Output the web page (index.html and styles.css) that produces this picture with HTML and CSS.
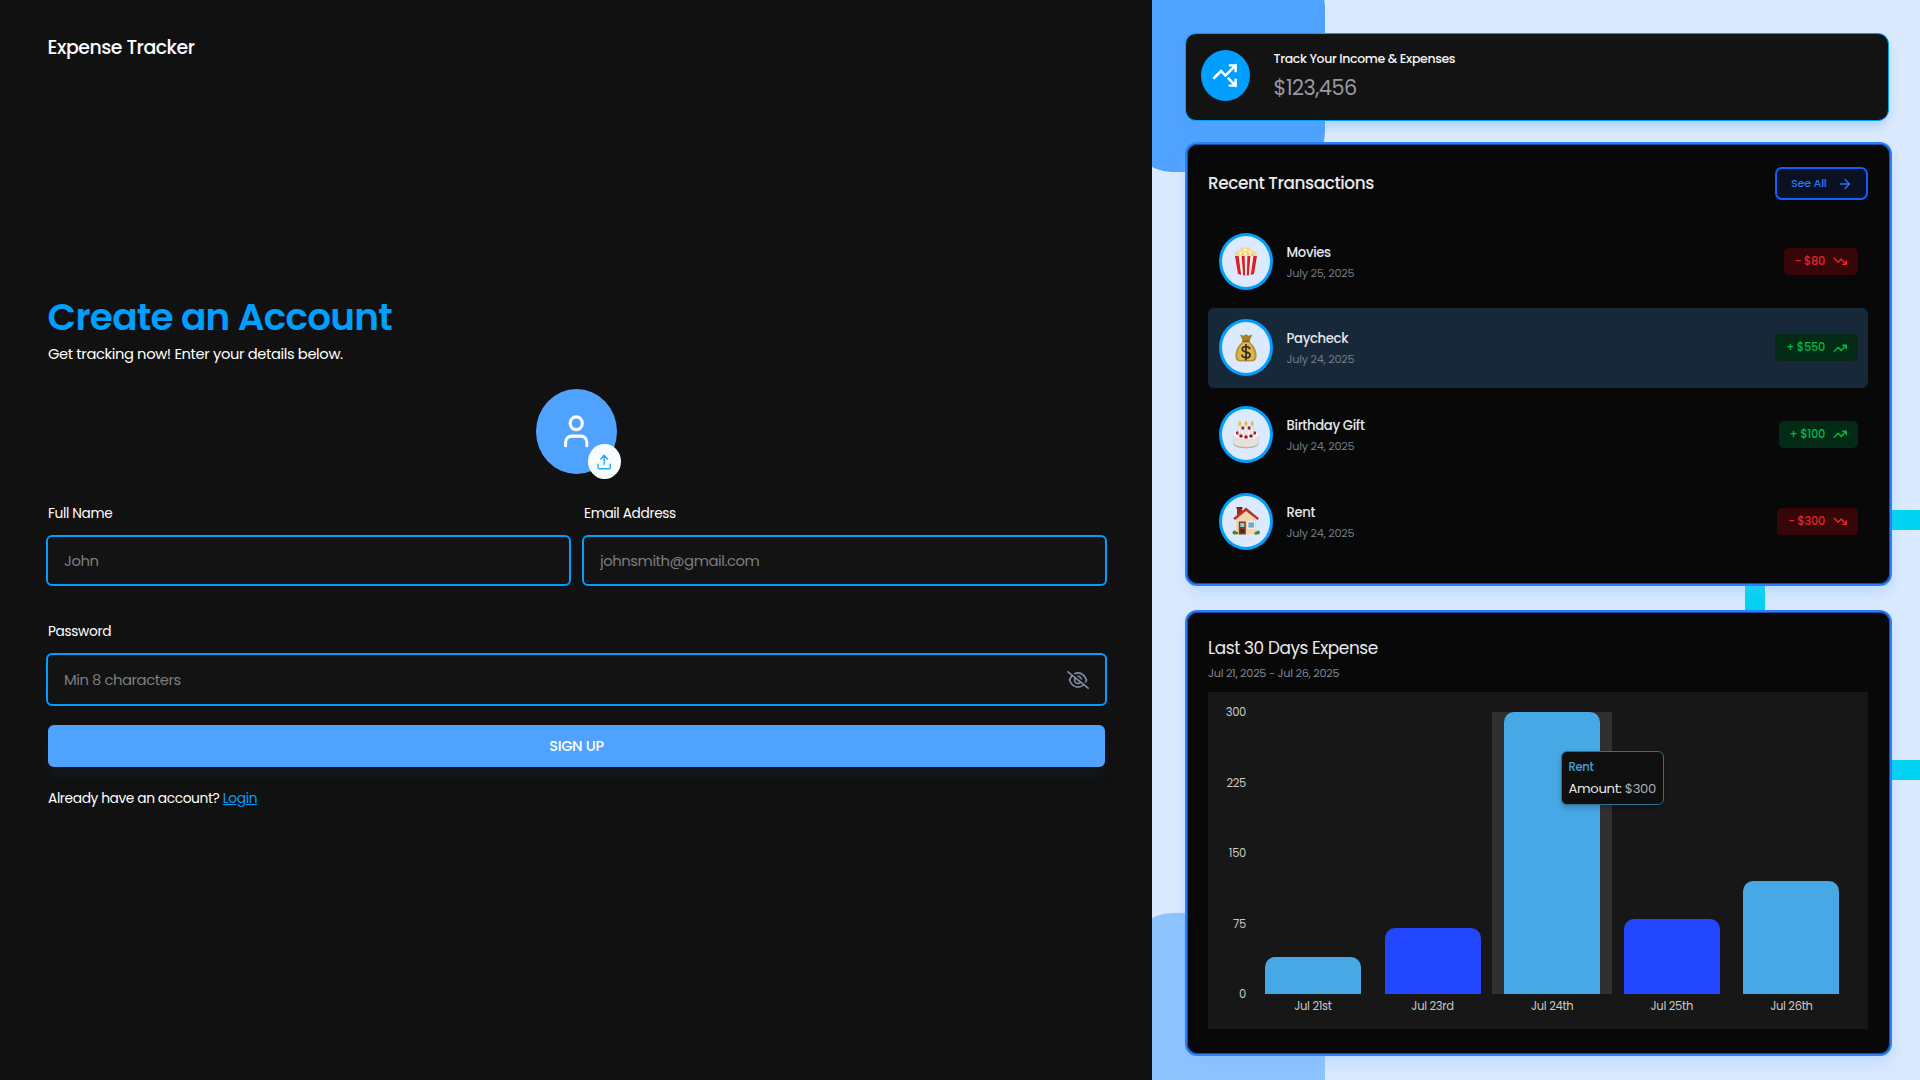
FILE: index.html
```html
<!DOCTYPE html>
<html lang="en">
<head>
<meta charset="utf-8">
<title>Expense Tracker</title>
<link rel="stylesheet" href="styles.css">
</head>
<body>
<svg class="sprite" aria-hidden="true">
  <symbol id="up" viewBox="0 0 24 24"><path d="m22 7-8.5 8.5-5-5L2 17M16 7h6v6"/></symbol>
  <symbol id="down" viewBox="0 0 24 24"><path d="m22 17-8.5-8.5-5 5L2 7M16 17h6v-6"/></symbol>
</svg>
<main class="page">
  <section class="auth">
    <h2 class="brand">Expense Tracker</h2>
    <h1 class="title">Create an Account</h1>
    <p class="lead">Get tracking now! Enter your details below.</p>
    <div class="photo">
      <svg class="photo-icon" viewBox="0 0 24 24" preserveAspectRatio="none"><circle cx="12" cy="7" r="4"/><path d="M19 21v-2a4 4 0 0 0-4-4H9a4 4 0 0 0-4 4v2"/></svg>
      <button class="upload" type="button" aria-label="Upload photo"><svg class="upload-icon" viewBox="0 0 24 24" preserveAspectRatio="none"><path d="M12 3v12M17 8l-5-5-5 5M21 15v4a2 2 0 0 1-2 2H5a2 2 0 0 1-2-2v-4"/></svg></button>
    </div>
    <form class="form">
      <div class="field"><label class="label">Full Name</label><div class="box"><input class="input" type="text" placeholder="John"></div></div>
      <div class="field"><label class="label">Email Address</label><div class="box"><input class="input" type="text" placeholder="johnsmith@gmail.com"></div></div>
      <div class="field field-wide"><label class="label">Password</label><div class="box box-tall"><input class="input" type="password" placeholder="Min 8 characters"><svg class="eye" viewBox="0 0 640 512" preserveAspectRatio="none"><path d="M70 256C130 120 220 55 320 55S510 120 570 256C510 392 420 457 320 457S130 392 70 256z"/><circle cx="320" cy="256" r="100"/><path d="M350 200a60 60 0 0 1 20 80"/><path class="eye-gap" d="M70 0L640 452"/><path d="M26 26L614 488"/></svg></div></div>
    </form>
    <button class="submit" type="button">SIGN UP</button>
    <p class="switch">Already have an account? <a class="link" href="#">Login</a></p>
  </section>

  <aside class="showcase">
    <div class="shape shape-top"></div>
    <div class="shape shape-ring"></div>
    <div class="shape shape-bottom"></div>

    <div class="stat">
      <div class="stat-icon"><svg class="stat-svg" viewBox="0 0 24 24"><path d="M14.8 14.8 21 21M21 16v5h-5M21 3l-9 9-4-4-6 6M21 8V3h-5"/></svg></div>
      <div class="stat-text"><h6 class="stat-label">Track Your Income &amp; Expenses</h6><span class="stat-value">$123,456</span></div>
    </div>

    <div class="card card-list">
      <div class="card-head"><h5 class="card-title">Recent Transactions</h5>
        <button class="see-all" type="button">See All<svg class="arrow" viewBox="0 0 24 24"><path d="M3 12h18M12 3l9 9-9 9"/></svg></button></div>
      <ul class="rows">
        <li class="row">
          <div class="bubble"><svg class="emoji" viewBox="0 0 30 30">
            <g fill="#f2d98c"><circle cx="7" cy="8" r="3.2"/><circle cx="12" cy="5" r="3.4"/><circle cx="17" cy="4.5" r="3.4"/><circle cx="22.5" cy="8" r="3.2"/><circle cx="15" cy="8" r="4"/></g>
            <g fill="#fbefc0"><circle cx="9.5" cy="7" r="1.6"/><circle cx="14" cy="4" r="1.6"/><circle cx="19" cy="6" r="1.7"/><circle cx="14.5" cy="8" r="1.6"/></g>
            <g fill="#d9b050"><circle cx="11.8" cy="8.6" r=".8"/><circle cx="17" cy="7.8" r=".8"/><circle cx="21.5" cy="9" r=".8"/></g>
            <path fill="#f6efec" d="M4 10h22l-3 18q-8 3-16 0z"/>
            <path fill="#d8202c" d="M4 10h3.6l2.6 19-3.2-1zM10.600 10h3l.6 19.600-2-.1zM16.400 10h3l-1.600 19.500-2 .1zM22.400 10H26l-3 18-3.200 1z"/></svg></div>
          <div class="row-text"><p class="row-name">Movies</p><p class="row-date">July 25, 2025</p></div>
          <div class="badge badge-out">- $80<svg class="trend"><use href="#down"/></svg></div>
        </li>
        <li class="row row-active">
          <div class="bubble"><svg class="emoji" viewBox="0 0 30 30">
            <path fill="#a97f24" d="M9 1.500l3.500 1.200L15 1.300l2.500 1.400 4-1.200-3.200 6.500h-6.400z"/>
            <path fill="#bb922f" d="M12 8h6c4 3.500 7.600 8.500 7.600 14.500 0 4.500-2 6-5 6H9.400c-3 0-5-1.500-5-6C4.400 16.500 8 11.500 12 8z"/>
            <path fill="#dcb851" d="M12.300 9.500h5.400c3.500 4 5.900 8.500 5.900 12.500 0 3.800-1.500 5-4 5h-9.200c-2.500 0-4-1.200-4-5 0-4 2.400-8.500 5.900-12.500z"/>
            <path fill="#7c5a1c" d="M11 7.500h8v1.300h-8z"/>
            <path fill="none" stroke="#332d22" stroke-width="1.700" d="M18.800 15.500c-.8-1.500-2.200-2-3.800-2-2 0-3.700 1-3.700 2.700 0 4 7.800 1.800 7.800 5.700 0 1.800-1.800 2.800-4 2.800-2 0-3.600-.8-4.200-2.500M15 11.500v15.200"/></svg></div>
          <div class="row-text"><p class="row-name">Paycheck</p><p class="row-date">July 24, 2025</p></div>
          <div class="badge badge-in">+ $550<svg class="trend"><use href="#up"/></svg></div>
        </li>
        <li class="row">
          <div class="bubble"><svg class="emoji" viewBox="0 0 30 30">
            <path fill="#b9b5ae" d="M2.300 16v8.500c0 6.500 25.400 6.500 25.400 0V16z"/>
            <path fill="#e4e0da" d="M2.300 16v7c0 6.500 25.400 6.500 25.400 0v-7z"/>
            <ellipse cx="15" cy="15.500" rx="12.700" ry="4.800" fill="#f7f4f0"/>
            <g fill="#a3123c"><circle cx="6.500" cy="14" r="1.700"/><circle cx="11.800" cy="9" r="1.700"/><circle cx="18.200" cy="9" r="1.700"/><circle cx="23.500" cy="14" r="1.700"/><circle cx="10" cy="17" r="1.800"/><circle cx="15" cy="18" r="1.800"/><circle cx="20" cy="17" r="1.800"/></g>
            <path fill="#f3eedd" stroke="#c9c2b2" stroke-width=".5" d="M7.500 7h2.600v8H7.500zM13.700 7h2.600v8.500h-2.600zM19.900 7h2.600v8h-2.600z"/>
            <path fill="#e0c23a" d="M8.800 1.500q3 4 0 5.500-3-1.500 0-5.500zM15 1.500q3 4 0 5.500-3-1.500 0-5.500zM21.200 1.500q3 4 0 5.500-3-1.500 0-5.500z"/></svg></div>
          <div class="row-text"><p class="row-name">Birthday Gift</p><p class="row-date">July 24, 2025</p></div>
          <div class="badge badge-in">+ $100<svg class="trend"><use href="#up"/></svg></div>
        </li>
        <li class="row">
          <div class="bubble"><svg class="emoji" viewBox="0 0 30 30">
            <path fill="#a32a22" d="M6 2h5v9H6z"/><path fill="#7f1f1b" d="M5.500 1h6v2h-6z"/>
            <path fill="#f0d5ae" d="M5 13l10-9 10 9v15.500H5z"/>
            <path fill="#b5332b" d="M15 1.500L28 12.200l-1.500 1.900L15 5 4 14.100 2.200 12.200z"/>
            <path fill="#74412a" d="M7.800 15.500h7v13h-7z"/><path fill="#9dc4dc" d="M9.300 17h4v4h-4z"/><path fill="#4f2a1b" d="M9.300 23h4v4h-4z"/>
            <path fill="#fff" d="M16.500 15.500h7.500v7h-7.500z"/><path fill="#72a9d3" d="M17.300 16.300h5.900v5.400h-5.900z"/>
            <g fill="#4c8431"><circle cx="3.500" cy="26.500" r="2"/><circle cx="5.700" cy="27.200" r="1.400"/><circle cx="25" cy="27.200" r="1.500"/><circle cx="27" cy="26.500" r="2"/></g></svg></div>
          <div class="row-text"><p class="row-name">Rent</p><p class="row-date">July 24, 2025</p></div>
          <div class="badge badge-out">- $300<svg class="trend"><use href="#down"/></svg></div>
        </li>
      </ul>
    </div>

    <div class="card card-chart">
      <h5 class="chart-title">Last 30 Days Expense</h5>
      <p class="chart-range">Jul 21, 2025 - Jul 26, 2025</p>
      <div class="chart">
        <div class="y-axis"><span>300</span><span>225</span><span>150</span><span>75</span><span>0</span></div>
        <div class="plot">
          <div class="bars">
            <div class="slot"><div class="bar" style="height:13.3%"></div></div>
            <div class="slot"><div class="bar bar-alt" style="height:23.4%"></div></div>
            <div class="slot slot-hover"><div class="bar" style="height:100%"></div></div>
            <div class="slot"><div class="bar bar-alt" style="height:26.7%"></div></div>
            <div class="slot"><div class="bar" style="height:40%"></div></div>
          </div>
          <div class="x-axis"><span>Jul 21st</span><span>Jul 23rd</span><span>Jul 24th</span><span>Jul 25th</span><span>Jul 26th</span></div>
        </div>
        <div class="tooltip"><p class="tip-name">Rent</p><p class="tip-value">Amount: <span class="tip-sum">$300</span></p></div>
      </div>
    </div>
  </aside>
</main>
</body>
</html>
```
FILE: styles.css
```css
* { box-sizing: border-box; letter-spacing: -.025em; }
body, h1, h2, h5, h6, p, ul { margin: 0; padding: 0; }
body { font-family: Poppins, Inter, sans-serif; background: #111; color: #f3f4f6; overflow: hidden; }
button, input { font-family: inherit; padding: 0; border: 0; }
svg { fill: none; stroke: currentColor; stroke-width: 2; stroke-linecap: round; stroke-linejoin: round; display: block; flex: none; }
.sprite { display: none; }

.page { display: flex; width: 1920px; height: 1080px; }

.auth { width: 1152px; padding: 34px 47px 0 48px; background: #111; display: flex; flex-direction: column; }
.brand { font-size: 18.900px; font-weight: 500; line-height: 28px; color: #fff; margin-left: -.5px; }
.title { font-size: 37.400px; font-weight: 600; line-height: 44px; letter-spacing: -.02em; color: #009fff; margin: 233px 0 0 -.5px; }
.lead { font-size: 14.700px; line-height: 20px; margin-top: 5px; color: #fff; }

.photo { position: relative; width: 81px; height: 85px; margin: 25px auto 0; border-radius: 50%; background: #50a2ff; color: #fff; display: grid; place-items: center; }
.photo-icon { width: 36.500px; height: 38.500px; }
.upload { position: absolute; left: 52px; top: 55px; width: 32.500px; height: 35px; border-radius: 50%; background: #f8fcff; color: #22a8fb; display: grid; place-items: center; }
.upload-icon { width: 16.300px; height: 18px; }

.form { display: grid; grid-template-columns: 1fr 1fr; column-gap: 11px; row-gap: 35px; margin: 29.500px -2px 0; }
.field-wide { grid-column: 1 / -1; }
.label { display: block; padding-left: 2px; margin-bottom: 11.500px; font-size: 13.700px; line-height: 20px; color: #fff; }
.box { display: flex; align-items: center; height: 51px; padding: 0 15.500px 0 16px; border: 2px solid #009fff; border-radius: 6px; background: #131313; }
.field-wide .label { margin-top: .5px; }
.box-tall { height: 53px; padding-right: 16px; }
.input { flex: 1; min-width: 0; height: 24px; background: transparent; font-size: 14.800px; letter-spacing: -.03em; color: #fff; outline: none; }
.input::placeholder { color: #7e7e7e; opacity: 1; }
.eye { width: 22px; height: 18px; color: #7f8ca3; stroke-width: 50; }
.eye-gap { stroke: #131313; }

.submit { height: 42px; margin-top: 19px; padding-top: 1px; border-radius: 6px; background: #50a2ff; color: #fff; font-size: 14.600px; font-weight: 500; box-shadow: 0 10px 15px -3px rgba(43, 80, 160, .12); }
.switch { margin-top: 22px; font-size: 13.800px; line-height: 20px; letter-spacing: -.03em; color: #fff; }
.link { color: #009fff; text-decoration: underline; }

.showcase { position: relative; width: 768px; height: 1080px; overflow: hidden; background: #dbeafe; padding: 33px 0 0 33px; display: flex; flex-direction: column; }
.shape { position: absolute; }
.shape-top { left: -20px; top: -32px; width: 192.500px; height: 204px; border-radius: 40px; background: #50a2ff; }
.shape-ring { left: 593px; top: 510px; width: 260px; height: 269.500px; border: 20px solid #00d3f2; }
.shape-bottom { left: -20px; top: 912.500px; width: 192.500px; height: 204px; border-radius: 40px; background: #8ec5ff; }

.stat { position: relative; width: 704px; height: 88px; padding: 16px 15px; display: flex; gap: 23.500px; background: #131313; border: 1px solid #009fff; border-radius: 11px; box-shadow: 0 6px 12px -2px rgba(80, 160, 255, .4); }
.stat-icon { width: 49px; height: 51px; border-radius: 50%; background: #009fff; color: #fff; display: grid; place-items: center; }
.stat-svg { width: 27px; height: 27px; stroke-linecap: square; stroke-linejoin: miter; stroke-width: 2.200; }
.stat-label { font-size: 12.500px; font-weight: 500; line-height: 18px; letter-spacing: -.028em; color: #f3f4f6; }
.stat-value { display: block; font-size: 20.800px; line-height: 26px; margin-top: 7px; color: #98989f; }

.card { position: relative; width: 707px; background: #080808; border: 2px solid #2b7fff; border-radius: 12px; box-shadow: inset 0 0 0 1px #174fa6, 0 8px 16px -2px rgba(120, 180, 255, .35); }
.card-list { height: 444px; margin-top: 21px; padding: 23px 22px 0 21px; }
.card-head { display: flex; justify-content: space-between; align-items: center; height: 33px; }
.card-title { font-size: 16.900px; font-weight: 500; line-height: 24px; margin-top: -1px; color: #e8eaec; }
.see-all { display: flex; align-items: center; justify-content: space-between; width: 93px; height: 33px; padding: 0 15.500px 0 14px; border: 2px solid #155dfc; border-radius: 7px; background: #0a1122; color: #2b74f5; font-size: 11.300px; font-weight: 500; }
.arrow { width: 12px; height: 12px; stroke-width: 2.600; }
.rows { list-style: none; margin-top: 21.500px; display: grid; gap: 7.100px; }
.row { display: flex; align-items: center; height: 79.500px; padding: 0 10.500px; border-radius: 6px; }
.row-active { background: #172839; }
.bubble { width: 54px; height: 57px; border: 3px solid #009fff; border-radius: 50%; background: #dbeafe; display: grid; place-items: center; }
.emoji { width: 30px; height: 30px; stroke: none; }
.row-text { flex: 1; margin: 2px 0 0 14px; }
.row-name { font-size: 13.200px; font-weight: 500; line-height: 20px; color: #e5e7eb; }
.row-date { font-size: 11.300px; line-height: 18px; margin-top: 1px; color: #717b8b; }
.badge { display: flex; align-items: center; gap: 7.500px; height: 27px; padding: 0 10.500px 0 11px; border-radius: 5px; font-size: 11.400px; font-weight: 500; }
.badge-out { background: #370608; color: #e4252d; }
.badge-in { background: #032a14; color: #00b84a; }
.trend { width: 14.500px; height: 14.500px; stroke-width: 2.400; }

.card-chart { height: 446px; margin-top: 24px; padding: 24px 22px 0 21px; }
.chart-title { font-size: 16.900px; font-weight: 400; line-height: 24px; color: #e8eaec; }
.chart-range { font-size: 11.300px; line-height: 18px; margin-top: 3.500px; color: #7e8795; }
.chart { position: relative; height: 337.500px; margin-top: 10px; padding: 12.500px 16.800px 0 0; display: flex; gap: 7.200px; background: #171717; font-size: 11.500px; line-height: 16px; color: #c8c8c8; }
.y-axis { width: 38px; height: 298px; display: flex; flex-direction: column; justify-content: space-between; text-align: right; }
.plot { flex: 1; padding-top: 8px; }
.bars, .x-axis { display: grid; grid-template-columns: repeat(5, 1fr); }
.bars { height: 282px; }
.slot { display: flex; align-items: flex-end; justify-content: center; }
.slot-hover { background: #303030; }
.bar { width: 96px; border-radius: 10px 10px 0 0; background: #46a8e4; }
.bar-alt { background: #2346ff; }
.x-axis { margin-top: 4px; text-align: center; }
.tooltip { position: absolute; left: 353px; top: 59px; width: 102.500px; height: 54px; padding: 7.500px 6.500px; border: 1px solid #2d7199; border-radius: 6px; background: #0f0f0f; box-shadow: 0 3px 5px rgba(0, 0, 0, .2); }
.tip-name { font-size: 11.500px; font-weight: 500; line-height: 16px; color: #46a0d8; }
.tip-value { font-size: 13.200px; line-height: 20px; margin-top: 3.500px; color: #e5e7eb; white-space: nowrap; }
.tip-sum { color: #a9adb3; }
```
